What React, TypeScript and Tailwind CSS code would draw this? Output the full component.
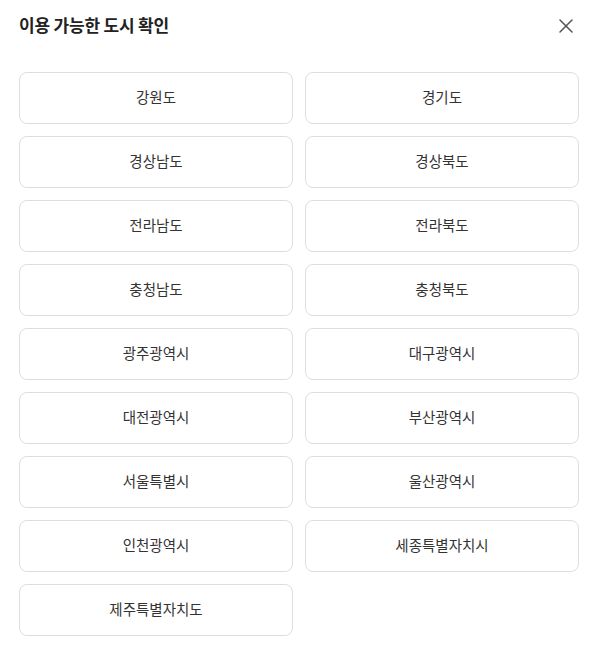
import { X } from "lucide-react";

const CITIES = [
  "강원도",
  "경기도",
  "경상남도",
  "경상북도",
  "전라남도",
  "전라북도",
  "충청남도",
  "충청북도",
  "광주광역시",
  "대구광역시",
  "대전광역시",
  "부산광역시",
  "서울특별시",
  "울산광역시",
  "인천광역시",
  "세종특별자치시",
  "제주특별자치도",
];

export default function App() {
  return (
    <div
      className="w-[592px] h-[649px] bg-white overflow-hidden"
      style={{ fontFamily: '"Noto Sans CJK KR", "Noto Sans", sans-serif' }}
    >
      <div className="pl-[19px] w-[579px]">
        {/* Header */}
        <div className="flex items-center justify-between h-[52px]">
          <h2 className="text-[17px] font-bold text-[#222] tracking-[-0.2px] pb-[3px]">이용 가능한 도시 확인</h2>
          <button className="text-[#555] mr-[1px]">
            <X className="w-[24px] h-[24px]" strokeWidth={1.5} />
          </button>
        </div>

        {/* City grid */}
        <div className="grid grid-cols-2 gap-3 mt-[20px]">
          {CITIES.map((c) => (
            <button
              key={c}
              className="h-[52px] pb-[3px] rounded-lg border border-[#dedede] bg-white text-[14.5px] text-[#333]"
            >
              {c}
            </button>
          ))}
        </div>
      </div>
    </div>
  );
}
